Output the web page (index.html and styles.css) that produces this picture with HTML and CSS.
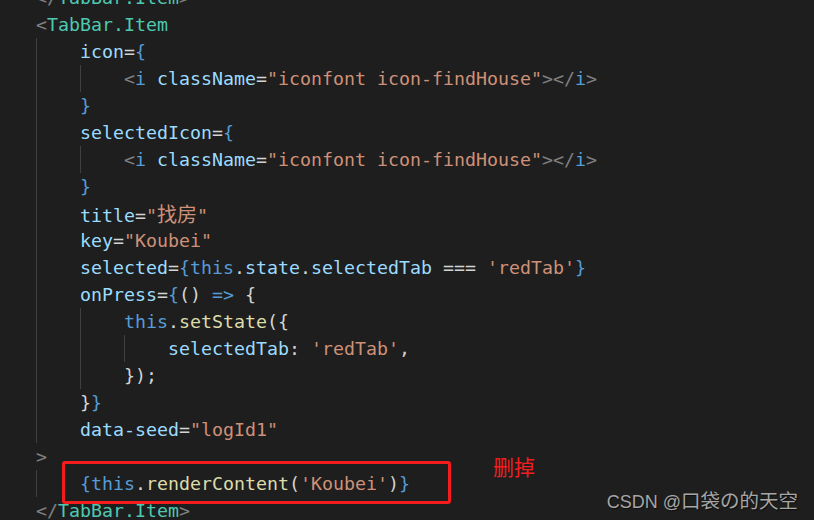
FILE: index.html
```html
<!DOCTYPE html>
<html lang="zh-CN">
<head>
<meta charset="utf-8">
<title>TabBar.Item</title>
<link rel="stylesheet" href="styles.css">
</head>
<body>
<div class="page">
  <div class="code">
    <div class="ln"><span class="p">&lt;/</span><span class="tag">TabBar.Item</span><span class="p">&gt;</span></div>
    <div class="ln"><span class="p">&lt;</span><span class="tag">TabBar.Item</span></div>
    <div class="ln"><span class="in g"></span><span class="at">icon</span><span class="op">=</span><span class="kw">{</span></div>
    <div class="ln"><span class="in g"></span><span class="in g"></span><span class="p">&lt;</span><span class="kw">i</span> <span class="at">className</span><span class="op">=</span><span class="st">"iconfont icon-findHouse"</span><span class="p">&gt;&lt;/</span><span class="kw">i</span><span class="p">&gt;</span></div>
    <div class="ln"><span class="in g"></span><span class="kw">}</span></div>
    <div class="ln"><span class="in g"></span><span class="at">selectedIcon</span><span class="op">=</span><span class="kw">{</span></div>
    <div class="ln"><span class="in g"></span><span class="in g"></span><span class="p">&lt;</span><span class="kw">i</span> <span class="at">className</span><span class="op">=</span><span class="st">"iconfont icon-findHouse"</span><span class="p">&gt;&lt;/</span><span class="kw">i</span><span class="p">&gt;</span></div>
    <div class="ln"><span class="in g"></span><span class="kw">}</span></div>
    <div class="ln"><span class="in g"></span><span class="at">title</span><span class="op">=</span><span class="st">"<span class="cjk">找房</span>"</span></div>
    <div class="ln"><span class="in g"></span><span class="at">key</span><span class="op">=</span><span class="st">"Koubei"</span></div>
    <div class="ln"><span class="in g"></span><span class="at">selected</span><span class="op">=</span><span class="kw">{this</span><span class="op">.</span><span class="at">state</span><span class="op">.</span><span class="at">selectedTab</span><span class="op"> === </span><span class="st">'redTab'</span><span class="kw">}</span></div>
    <div class="ln"><span class="in g"></span><span class="at">onPress</span><span class="op">=</span><span class="kw">{</span><span class="op">() </span><span class="kw">=&gt;</span><span class="op"> {</span></div>
    <div class="ln"><span class="in g"></span><span class="in g"></span><span class="kw">this</span><span class="op">.</span><span class="fn">setState</span><span class="op">({</span></div>
    <div class="ln"><span class="in g"></span><span class="in g"></span><span class="in g"></span><span class="at">selectedTab</span><span class="op">: </span><span class="st">'redTab'</span><span class="op">,</span></div>
    <div class="ln"><span class="in g"></span><span class="in g"></span><span class="op">});</span></div>
    <div class="ln"><span class="in g"></span><span class="op">}</span><span class="kw">}</span></div>
    <div class="ln"><span class="in g"></span><span class="at">data-seed</span><span class="op">=</span><span class="st">"logId1"</span></div>
    <div class="ln"><span class="p">&gt;</span></div>
    <div class="ln"><span class="in g"></span><span class="kw">{this</span><span class="op">.</span><span class="fn">renderContent</span><span class="op">(</span><span class="st">'Koubei'</span><span class="op">)</span><span class="kw">}</span></div>
    <div class="ln"><span class="p">&lt;/</span><span class="tag">TabBar.Item</span><span class="p">&gt;</span></div>
  </div>
  <div class="mark-box"></div>
  <div class="mark-note">删掉</div>
  <div class="watermark">CSDN @<span class="wm-cjk">口袋の的天空</span></div>
</div>
</body>
</html>
```
FILE: styles.css
```css
html, body {
  margin: 0;
  padding: 0;
  background: #1e1e1e;
}

.page {
  position: relative;
  width: 814px;
  height: 520px;
  overflow: hidden;
  background: #1e1e1e;
}

.code {
  margin-top: -16px;
  padding-left: 36px;
  font-family: "DejaVu Sans Mono", "Liberation Mono", monospace;
  font-size: 18.27px;
  color: #d4d4d4;
}

.ln {
  height: 27px;
  line-height: 27px;
  white-space: pre;
}

.in {
  display: inline-block;
  width: 44px;
  height: 27px;
  vertical-align: top;
}

.in.g {
  box-shadow: inset 1px 0 0 #404040;
}

.p { color: #808080; }
.tag { color: #4ec9b0; }
.at { color: #9cdcfe; }
.op { color: #d4d4d4; }
.kw { color: #569cd6; }
.st { color: #ce9178; }
.fn { color: #dcdcaa; }

.cjk {
  font-family: "Noto Sans CJK SC", sans-serif;
  font-size: 20px;
  line-height: 27px;
}

.mark-box {
  position: absolute;
  left: 62px;
  top: 461px;
  width: 389px;
  height: 43px;
  box-sizing: border-box;
  border: 3px solid #f41c1c;
  border-radius: 3px;
}

.mark-note {
  position: absolute;
  left: 493px;
  top: 456px;
  font-family: "Noto Sans CJK SC", sans-serif;
  font-size: 21px;
  line-height: 1;
  color: #f41c1c;
}

.watermark {
  position: absolute;
  right: 16px;
  top: 490px;
  font-family: "Liberation Sans", "Noto Sans CJK SC", sans-serif;
  font-size: 18px;
  line-height: 20px;
  color: #a6a6a6;
  text-shadow: 1px 1px 1px rgba(0, 0, 0, 0.6);
  white-space: nowrap;
}

.wm-cjk {
  font-family: "Noto Sans CJK SC", sans-serif;
  font-size: 19.5px;
  line-height: 20px;
}
```
